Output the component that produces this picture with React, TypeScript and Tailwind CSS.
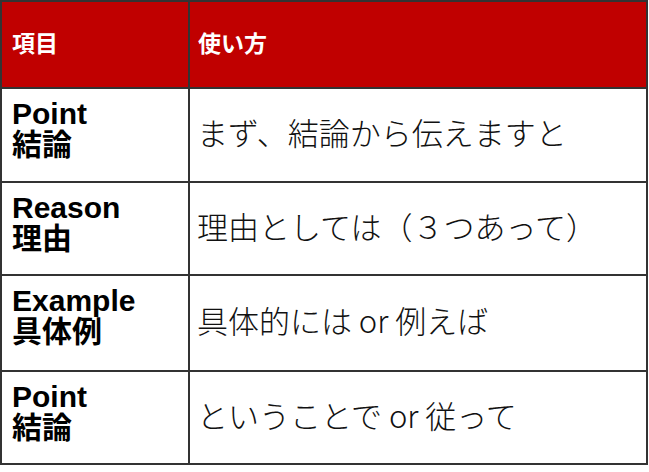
const rows = [
  { en: "Point", ja: "結論", use: "まず、結論から伝えますと", h: "h-[92px]" },
  { en: "Reason", ja: "理由", use: "理由としては（３つあって）", h: "h-[91px]" },
  { en: "Example", ja: "具体例", use: "具体的には or 例えば", h: "h-[94px]" },
  { en: "Point", ja: "結論", use: "ということで or 従って", h: "h-[91px]" },
];

export default function App() {
  return (
    <div className="w-[649px] h-[472px] bg-white">
      <div className="w-[648px] bg-[#333] p-[2px] grid grid-cols-[186px_1fr] gap-[2px]">
        <div className="h-[85px] bg-[#c00000] flex items-center pl-[10px] text-white font-bold text-[23px] font-['Liberation_Sans','Noto_Sans_CJK_JP',sans-serif]">
          項目
        </div>
        <div className="h-[85px] bg-[#c00000] flex items-center pl-[8px] text-white font-bold text-[23px] font-['Liberation_Sans','Noto_Sans_CJK_JP',sans-serif]">
          使い方
        </div>
        {rows.map((r, i) => (
          <>
            <div
              key={"a" + i}
              className={`${r.h} bg-white pl-[10px] pt-[9px] text-black font-bold text-[30px] leading-[31px] font-['Liberation_Sans','Noto_Sans_CJK_JP',sans-serif]`}
            >
              <div>{r.en}</div>
              <div>{r.ja}</div>
            </div>
            <div
              key={"b" + i}
              className={`${r.h} bg-white flex items-center pl-[7px] pb-[5px] text-[#111] font-light text-[31px] font-['Noto_Sans_CJK_JP',sans-serif]`}
            >
              {r.use}
            </div>
          </>
        ))}
      </div>
    </div>
  );
}
